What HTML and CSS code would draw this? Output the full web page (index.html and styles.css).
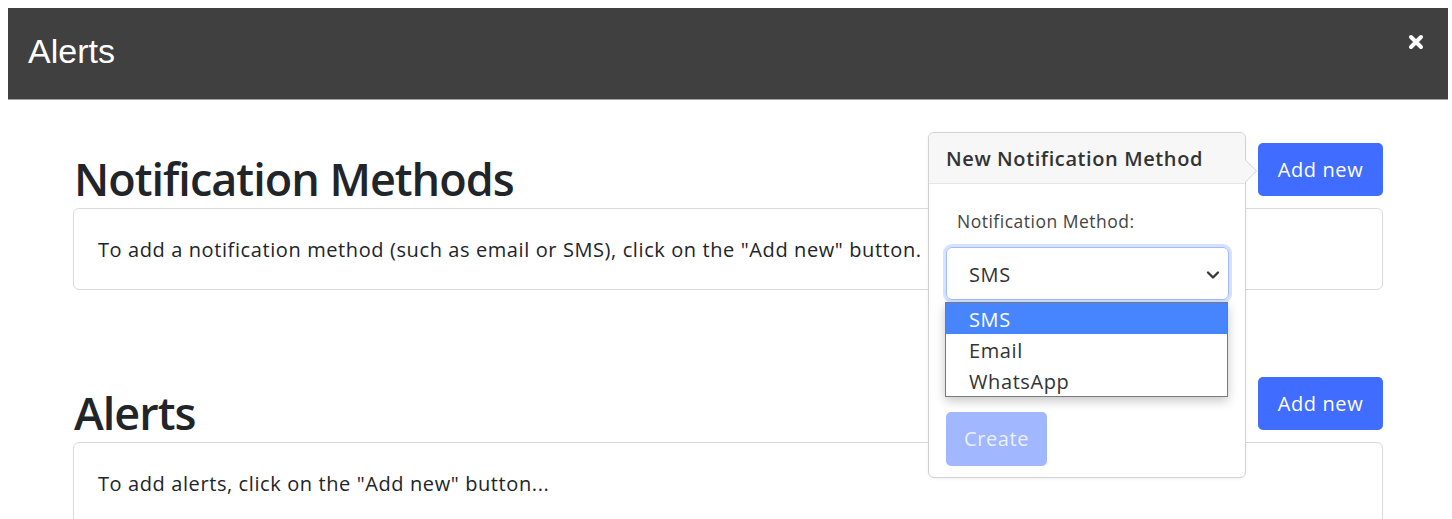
FILE: index.html
```html
<!DOCTYPE html>
<html lang="en">
<head>
<meta charset="utf-8">
<title>Alerts</title>
<link rel="stylesheet" href="styles.css">
</head>
<body>
  <header class="dialog-head">
    <h2 class="dialog-title">Alerts</h2>
    <button class="dialog-close" aria-label="Close">
      <svg width="16" height="16" viewBox="0 0 16 16" aria-hidden="true">
        <path d="M3 3 L13 13 M13 3 L3 13" stroke="#fff" stroke-width="4" stroke-linecap="round"/>
      </svg>
    </button>
  </header>

  <main class="content">
    <section class="block">
      <div class="block-head">
        <h1 class="block-title">Notification Methods</h1>
        <button class="btn btn-primary">Add new</button>
      </div>
      <div class="card">To add a notification method (such as email or SMS), click on the "Add new" button.</div>
    </section>

    <section class="block block-alerts">
      <div class="block-head">
        <h1 class="block-title">Alerts</h1>
        <button class="btn btn-primary">Add new</button>
      </div>
      <div class="card">To add alerts, click on the "Add new" button...</div>
    </section>

    <div class="popover">
      <div class="popover-head">New Notification Method</div>
      <div class="popover-body">
        <label class="field-label">Notification Method:</label>
        <div class="select-wrap">
          <div class="select">
            <span>SMS</span>
            <svg class="chevron" width="14" height="10" viewBox="0 0 14 10" aria-hidden="true">
              <path d="M2 2.5 L7 7.5 L12 2.5" fill="none" stroke="#343a40" stroke-width="2.4" stroke-linecap="round" stroke-linejoin="round"/>
            </svg>
          </div>
          <ul class="options">
            <li class="option option-active">SMS</li>
            <li class="option">Email</li>
            <li class="option">WhatsApp</li>
          </ul>
        </div>
        <button class="btn btn-primary btn-disabled">Create</button>
      </div>
    </div>
  </main>
</body>
</html>
```

FILE: styles.css
```css
* {
  box-sizing: border-box;
}

html, body {
  background: #fff;
}

body {
  margin: 8px 4px 0 8px;
  font-family: "Open Sans", "Noto Sans", sans-serif;
  font-size: 20px;
  letter-spacing: 0.6px;
  color: #212529;
  overflow: hidden;
}

/* dark dialog title bar */
.dialog-head {
  height: 92px;
  background: #404040;
  border-bottom: 1px solid #9ea3a8;
  display: flex;
  align-items: center;
  justify-content: space-between;
  padding: 0 24px 0 20px;
}

.dialog-title {
  margin: 0;
  font-family: "Liberation Sans", Arial, sans-serif;
  font-weight: 400;
  font-size: 34px;
  letter-spacing: 0;
  color: #fff;
  line-height: 1;
  padding-bottom: 6px;
}

.dialog-close {
  border: 0;
  background: none;
  padding: 0;
  width: 16px;
  height: 16px;
  display: block;
  margin-bottom: 24px;
}

.dialog-close svg {
  display: block;
}

/* page body */
.content {
  position: relative;
  margin: 0 65px 0 65px;
  padding-top: 43px;
}

.block-alerts {
  margin-top: 87px;
}

.block-head {
  display: flex;
  justify-content: space-between;
  align-items: flex-end;
  margin-bottom: 12px;
  padding-left: 1px;
}

.block-title {
  margin: 0 0 -10px 0;
  font-size: 45px;
  font-weight: 600;
  letter-spacing: -1px;
  line-height: 54px;
  color: #212529;
}

.card {
  border: 1px solid #d9d9d9;
  border-radius: 6px;
  padding: 26px 23px 24px 24px;
  line-height: 30px;
}

.btn {
  font-family: inherit;
  font-size: 20px;
  letter-spacing: 0.6px;
  border: 0;
  border-radius: 5px;
  line-height: 1;
}

.btn-primary {
  width: 125px;
  height: 53px;
  background: #406cff;
  color: #fff;
}

/* popover anchored to the first "Add new" */
.popover {
  position: absolute;
  top: 32px;
  left: 855px;
  width: 318px;
  height: 346px;
  background: #fff;
  border: 1px solid #d2d2d2;
  border-radius: 6px;
  box-shadow: 0 1px 3px rgba(0, 0, 0, 0.06);
}

.popover::before,
.popover::after {
  content: "";
  position: absolute;
  top: 26px;
  width: 0;
  height: 0;
  border-style: solid;
  border-color: transparent;
}

.popover::before {
  right: -12px;
  border-width: 12px 0 12px 12px;
  border-left-color: #d2d2d2;
}

.popover::after {
  right: -11px;
  border-width: 12px 0 12px 12px;
  border-left-color: #f7f7f7;
}

.popover-head {
  height: 51px;
  background: #f7f7f7;
  border-bottom: 1px solid #e6e6e6;
  border-radius: 6px 6px 0 0;
  padding: 0 17px;
  display: flex;
  align-items: center;
  font-size: 20px;
  font-weight: 600;
  color: #333;
}

.popover-body {
  padding: 24px 16px 0 17px;
}

.field-label {
  display: block;
  margin: 0 0 13px 11px;
  font-size: 17.5px;
  letter-spacing: 0.5px;
  line-height: 26px;
  color: #444;
}

.select-wrap {
  position: relative;
}

.select {
  width: 283px;
  height: 53px;
  border: 1px solid #9ebdfb;
  border-radius: 6px;
  box-shadow: 0 0 0 3px rgba(64, 120, 255, 0.22);
  display: flex;
  align-items: center;
  justify-content: space-between;
  padding: 2px 8px 0 22px;
  color: #333;
}

.chevron {
  display: block;
}

/* open native-style option list */
.options {
  position: absolute;
  top: 55px;
  left: -1px;
  width: 283px;
  margin: 0;
  padding: 0;
  list-style: none;
  background: #fff;
  border: 1px solid #7a7a7a;
  box-shadow: 0 4px 10px rgba(0, 0, 0, 0.22);
  z-index: 2;
}

.option {
  height: 31px;
  line-height: 33px;
  padding-left: 23px;
  color: #333;
}

.option-active {
  background: #4785ff;
  color: #fff;
}

.btn-disabled {
  display: block;
  width: 101px;
  height: 54px;
  margin-top: 112px;
  background: #a1b7ff;
  color: rgba(255, 255, 255, 0.8);
}
```
